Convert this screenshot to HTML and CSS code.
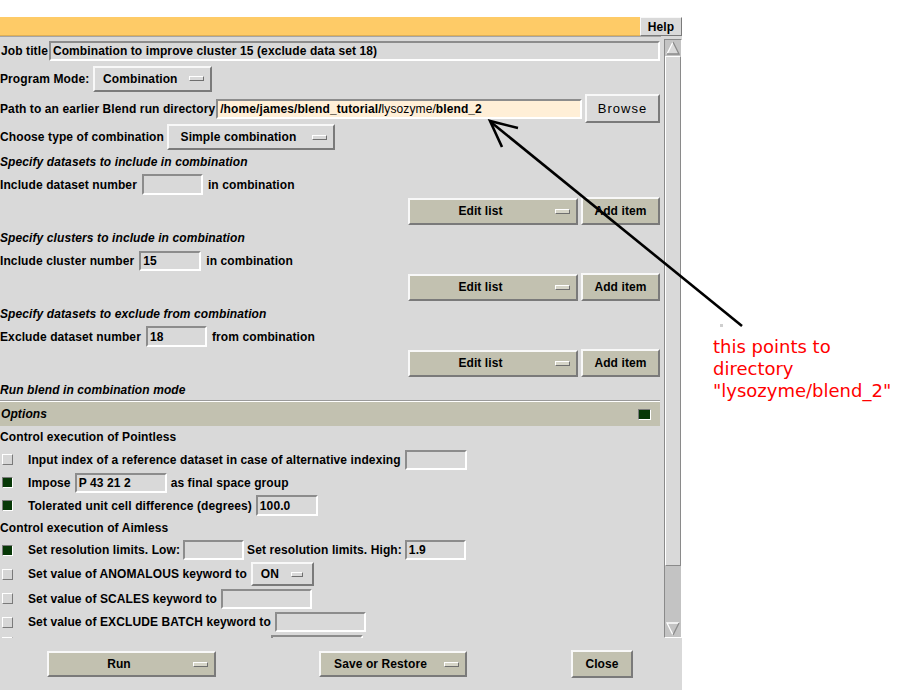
FILE: index.html
```html
<!DOCTYPE html>
<html>
<head>
<meta charset="utf-8">
<title>Blend combination</title>
<link rel="stylesheet" href="styles.css">
</head>
<body>
<div class="window">
  <div class="titlebar">
    <div class="banner"></div>
    <div class="btn help">Help</div>
  </div>
  <div class="main">
    <div class="content">
      <div class="row h26 gap1">
        <span class="lbl">Job title</span>
        <div class="entry grow">Combination to improve cluster 15 (exclude data set 18)</div>
      </div>
      <div class="row h29">
        <span>Program Mode:</span>
        <div class="mbtn w119 tall"><span class="txt">Combination</span><span class="ind"></span></div>
      </div>
      <div class="row h31 gap1">
        <span>Path to an earlier Blend run directory</span>
        <div class="entry grow cream">/home/james/blend_tutorial/<span class="thin">lysozyme/</span>blend_2</div>
        <div class="btn browse">Browse</div>
      </div>
      <div class="row h26 gap3">
        <span>Choose type of combination</span>
        <div class="mbtn w168 tall"><span class="txt">Simple combination</span><span class="ind"></span></div>
      </div>

      <div class="row h23 note">Specify datasets to include in combination</div>
      <div class="row h23 gap5">
        <span>Include dataset number</span>
        <div class="entry w61 tall21"></div>
        <span>in combination</span>
      </div>
      <div class="row h30 end">
        <div class="mbtn khaki w170 h27"><span class="txt">Edit list</span><span class="ind"></span></div>
        <div class="btn khaki additem">Add item</div>
      </div>

      <div class="row h23 note">Specify clusters to include in combination</div>
      <div class="row h23 gap5">
        <span>Include cluster number</span>
        <div class="entry w62">15</div>
        <span>in combination</span>
      </div>
      <div class="row h30 end">
        <div class="mbtn khaki w170 h27"><span class="txt">Edit list</span><span class="ind"></span></div>
        <div class="btn khaki additem">Add item</div>
      </div>

      <div class="row h23 note">Specify datasets to exclude from combination</div>
      <div class="row h23 gap5">
        <span>Exclude dataset number</span>
        <div class="entry w61 tall21">18</div>
        <span>from combination</span>
      </div>
      <div class="row h30 end">
        <div class="mbtn khaki w170 h27"><span class="txt">Edit list</span><span class="ind"></span></div>
        <div class="btn khaki additem">Add item</div>
      </div>

      <div class="row h23 note">Run blend in combination mode</div>

      <div class="options">
        <span class="note">Options</span>
        <span class="cb on band-cb"></span>
      </div>

      <div class="row h22">Control execution of Pointless</div>
      <div class="row h23">
        <span class="cb"></span>
        <span>Input index of a reference dataset in case of alternative indexing</span>
        <div class="entry w62"></div>
      </div>
      <div class="row h23">
        <span class="cb on"></span>
        <span>Impose</span>
        <div class="entry w92">P 43 21 2</div>
        <span>as final space group</span>
      </div>
      <div class="row h23">
        <span class="cb on"></span>
        <span>Tolerated unit cell difference (degrees)</span>
        <div class="entry w62 tall21">100.0</div>
      </div>
      <div class="row h22">Control execution of Aimless</div>
      <div class="row h22 gap3">
        <span class="cb on cb-wide"></span>
        <span>Set resolution limits. Low:</span>
        <div class="entry w61"></div>
        <span>Set resolution limits. High:</span>
        <div class="entry w61">1.9</div>
      </div>
      <div class="row h26">
        <span class="cb"></span>
        <span>Set value of ANOMALOUS keyword to</span>
        <div class="mbtn w63 h24"><span class="txt">ON</span><span class="ind small"></span></div>
      </div>
      <div class="row h23">
        <span class="cb"></span>
        <span>Set value of SCALES keyword to</span>
        <div class="entry w91"></div>
      </div>
      <div class="row h24">
        <span class="cb"></span>
        <span>Set value of EXCLUDE BATCH keyword to</span>
        <div class="entry w91"></div>
      </div>
      <div class="row h23 top1">
        <span class="cb low"></span>
        <div class="entry w92 push"></div>
      </div>
    </div>
    <div class="scrollbar">
      <svg class="arrow" width="16" height="16" viewBox="0 0 16 16">
        <polygon points="8,2 14,14 2,14" fill="#d9d9d9"/>
        <polyline points="2,14 8,2" stroke="#ffffff" stroke-width="1.3" fill="none"/>
        <polyline points="8,2 14,14 2,14" stroke="#8a8a8a" stroke-width="1.3" fill="none"/>
      </svg>
      <div class="slider"></div>
      <div class="trough"></div>
      <svg class="arrow" width="16" height="16" viewBox="0 0 16 16">
        <polygon points="2,2 14,2 8,14" fill="#c3c3c3"/>
        <polyline points="8,14 2,2 14,2" stroke="#ffffff" stroke-width="1.3" fill="none"/>
        <polyline points="14,2 8,14" stroke="#8a8a8a" stroke-width="1.3" fill="none"/>
      </svg>
    </div>
  </div>
  <div class="footer">
    <div class="mbtn khaki run"><span class="txt">Run</span><span class="ind"></span></div>
    <div class="mbtn khaki save"><span class="txt">Save or Restore</span><span class="ind"></span></div>
    <div class="btn khaki close">Close</div>
  </div>
</div>

<svg class="overlay" width="900" height="700" viewBox="0 0 900 700">
  <rect x="720" y="324" width="3" height="3" fill="#cfcfcf"/>
  <line x1="742" y1="326" x2="492" y2="123" stroke="#000" stroke-width="2.6"/>
  <polyline points="518,128 490,121 502,147" stroke="#000" stroke-width="2.6" fill="none"/>
</svg>
<div class="annotation">this points to<br>directory<br>"lysozyme/blend_2"</div>
</body>
</html>
```

FILE: styles.css
```css
body {
  margin: 0;
  width: 900px;
  height: 700px;
  background: #ffffff;
  position: relative;
  overflow: hidden;
  font: bold 12px "Liberation Sans", Arial, sans-serif;
  letter-spacing: 0.1px;
  color: #000;
}

.window {
  width: 682px;
  height: 673px;
  margin-top: 17px;
  background: #d9d9d9;
}

.titlebar {
  display: flex;
  height: 19px;
}
.banner {
  flex: 1;
  background: #fecb67;
  box-shadow: inset 0 -1px #e0b055;
}

.btn {
  box-sizing: border-box;
  display: flex;
  align-items: center;
  justify-content: center;
  border: 2px solid;
  border-color: #f8f8f8 #7a7a7a #7a7a7a #f8f8f8;
  background: #d9d9d9;
  white-space: nowrap;
}
.help {
  width: 42px;
  height: 19px;
  border-width: 1px;
}
.browse {
  width: 75px;
  height: 29px;
  margin-left: 2px;
  font-weight: normal;
  font-size: 13px;
  letter-spacing: 1px;
}

.main {
  display: flex;
  height: 602px;
}
.content {
  flex: 1;
  overflow: hidden;
  padding: 2px 1px 0 0;
  box-shadow: inset 0 1px #a5a5a5;
}

.row {
  display: flex;
  align-items: center;
  gap: 4px;
  white-space: nowrap;
}
.gap1 { gap: 1px; }
.gap3 { gap: 3px; }
.gap5 { gap: 5px; }
.end { justify-content: flex-end; gap: 3px; }
.top1 { align-items: flex-start; padding-top: 1px; box-sizing: border-box; }
.push { margin-left: 243px; }

.h22 { height: 22px; }
.h23 { height: 23px; }
.h24 { height: 24px; }
.h26 { height: 26px; }
.h29 { height: 29px; }
.h30 { height: 30px; }
.h31 { height: 31px; }

.lbl { padding-left: 1px; }

.note {
  font-style: italic;
  font-weight: bold;
}

.entry {
  box-sizing: border-box;
  height: 20px;
  border: 2px solid;
  border-color: #8c8c8c #ffffff #ffffff #8c8c8c;
  padding-left: 2px;
  display: flex;
  align-items: center;
  overflow: hidden;
  white-space: nowrap;
}
.entry.tall21 { height: 21px; }
.grow { flex: 1; }
.cream { background: #ffefd7; }
.thin { font-weight: normal; }
.w61 { width: 61px; }
.w62 { width: 62px; }
.w91 { width: 91px; }
.w92 { width: 92px; }

.mbtn {
  box-sizing: border-box;
  display: flex;
  align-items: center;
  border: 2px solid;
  border-color: #f8f8f8 #7a7a7a #7a7a7a #f8f8f8;
  background: #d9d9d9;
  white-space: nowrap;
}
.mbtn .txt {
  flex: 1;
  text-align: center;
}
.ind {
  box-sizing: border-box;
  width: 15px;
  height: 5px;
  margin: 0 6px 0 4px;
  border: 1px solid;
  border-color: #ffffff #6f6f6f #6f6f6f #ffffff;
  background: #d9d9d9;
}
.ind.small { width: 12px; margin-right: 9px; }
.khaki { background: #c2c1b0; }
.khaki .ind { background: #d6d5c8; }
.mbtn.tall { height: 26px; }
.w119 { width: 119px; }
.w168 { width: 168px; }
.w170 { width: 170px; }
.w63 { width: 63px; }
.h27 { height: 27px; }
.mbtn.h24 { height: 24px; }
.additem { width: 79px; height: 28px; }

.options {
  height: 24px;
  display: flex;
  align-items: center;
  justify-content: space-between;
  background: #c2c1b0;
  border-top: 1px solid #ffffff;
  box-shadow: 0 -1px #9a9a9a;
  padding-left: 1px;
}

.cb {
  box-sizing: border-box;
  width: 11px;
  height: 11px;
  margin: 0 11px 0 2px;
  border: 1px solid;
  border-color: #ffffff #7a7a7a #7a7a7a #ffffff;
  background: #d6d6d6;
  flex: none;
}
.cb.cb-wide { margin-right: 12px; }
.cb.low { margin-top: 2px; }
.cb.on {
  background: #073807;
  border-color: #7a7a7a #ffffff #ffffff #7a7a7a;
}
.band-cb {
  width: 13px;
  margin: 0 9px 0 0;
}

.scrollbar {
  box-sizing: border-box;
  width: 18px;
  margin: 3px 0 0 3px;
  height: 599px;
  display: flex;
  flex-direction: column;
  border: 1px solid;
  border-color: #8a8a8a #ffffff #ffffff #8a8a8a;
  background: #c3c3c3;
}
.arrow { display: block; flex: none; }
.slider {
  height: 510px;
  box-sizing: border-box;
  border: 1px solid;
  border-color: #ffffff #8a8a8a #8a8a8a #ffffff;
  background: #d9d9d9;
}
.trough { flex: 1; }

.footer {
  height: 52px;
  display: flex;
  align-items: center;
}
.run { width: 169px; height: 26px; margin-left: 47px; }
.save { width: 148px; height: 26px; margin-left: 103px; }
.close { width: 62px; height: 28px; margin-left: 104px; }

.overlay {
  position: absolute;
  left: 0;
  top: 0;
  pointer-events: none;
}
.annotation {
  position: absolute;
  left: 713px;
  top: 336px;
  font: normal 18px/22px "DejaVu Sans", sans-serif;
  letter-spacing: 0;
  color: #ff0000;
  white-space: nowrap;
}
```
